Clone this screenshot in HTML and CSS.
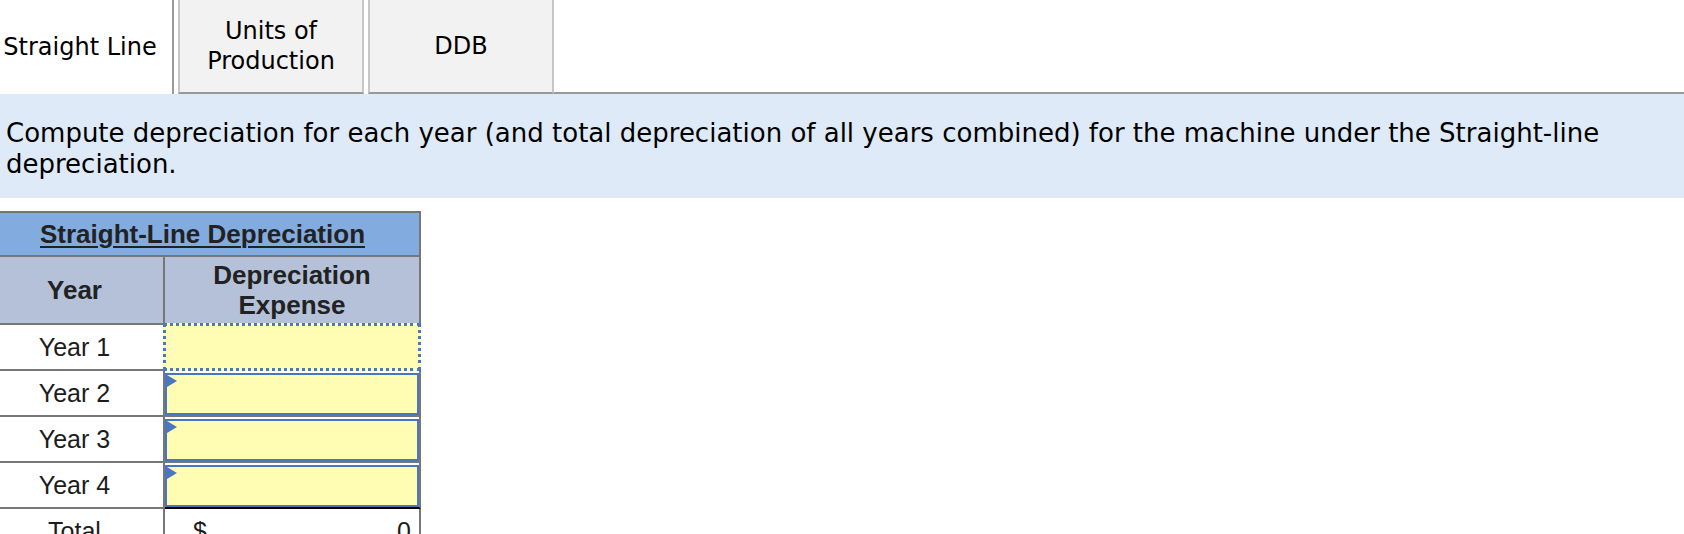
FILE: index.html
```html
<!DOCTYPE html>
<html lang="en">
<head>
<meta charset="utf-8">
<title>Straight-Line Depreciation</title>
<link rel="stylesheet" href="styles.css">
</head>
<body>
<div class="tabs">
  <div class="tab tab-active">Straight Line</div>
  <div class="tab">Units of<br>Production</div>
  <div class="tab">DDB</div>
  <div class="tab-fill"></div>
</div>

<div class="prompt">Compute depreciation for each year (and total depreciation of all years combined) for the machine under the Straight-line depreciation.</div>

<div class="sl">
  <div class="cell title"><span class="title-text">Straight-Line Depreciation</span></div>
  <div class="cell head col1">Year</div>
  <div class="cell head col2">Depreciation<br>Expense</div>

  <div class="cell label">Year 1</div>
  <div class="cell input-cell"><div class="input input-focus"></div></div>

  <div class="cell label">Year 2</div>
  <div class="cell input-cell"><div class="input input-marked"></div></div>

  <div class="cell label">Year 3</div>
  <div class="cell input-cell"><div class="input input-marked"></div></div>

  <div class="cell label">Year 4</div>
  <div class="cell input-cell last-input"><div class="input input-marked"></div></div>

  <div class="cell label">Total</div>
  <div class="cell total"><span>$</span><span>0</span></div>
</div>
</body>
</html>
```

FILE: styles.css
```css
html, body {
  margin: 0;
  padding: 0;
  background: #ffffff;
  overflow: hidden;
}

body {
  font-family: "DejaVu Sans", Verdana, sans-serif;
  font-size: 24px;
  color: #000000;
}

/* ---------- tabs ---------- */
.tabs {
  display: flex;
  height: 94px;
}

.tab {
  box-sizing: border-box;
  width: 186px;
  height: 94px;
  display: flex;
  align-items: center;
  justify-content: center;
  text-align: center;
  font-size: 24px;
  line-height: 30px;
  background: #f2f2f2;
  border-left: 2px solid #c6c6c6;
  border-right: 2px solid #c6c6c6;
  border-bottom: 2px solid #999999;
  margin-left: 4px;
}

.tab-active {
  width: 186px;
  margin-left: -12px;
  background: #ffffff;
  border-left: none;
  border-right: 2px solid #9a9a9a;
  border-bottom: none;
}

.tab-fill {
  flex: 1;
  border-bottom: 2px solid #999999;
}

/* ---------- prompt ---------- */
.prompt {
  background: #deeaf8;
  padding: 24px 6px 18px 6px;
  font-size: 26px;
  line-height: 31px;
}

/* ---------- table ---------- */
.sl {
  margin-top: 13px;
  margin-left: -14px;
  width: 435px;
  display: grid;
  grid-template-columns: 179px 256px;
  border-top: 2px solid #777777;
  font-family: "Liberation Sans", Arial, Helvetica, sans-serif;
  color: #1c1c1c;
}

.cell {
  box-sizing: border-box;
  border-bottom: 2px solid #777777;
  border-right: 2px solid #777777;
  height: 46px;
  display: flex;
  align-items: center;
  justify-content: center;
  text-align: center;
}

.title {
  grid-column: 1 / span 2;
  height: 44px;
  background: #82abe0;
  font-weight: bold;
  font-size: 26px;
  color: #222222;
}

.title-text {
  text-decoration: underline;
  text-decoration-thickness: 2px;
  text-underline-offset: 3px;
}

.head {
  height: 68px;
  background: #b4c1d8;
  font-weight: bold;
  font-size: 26px;
  line-height: 30px;
  color: #222222;
}

.label {
  font-size: 25px;
  background: #ffffff;
}

.input-cell {
  display: block;
  padding-top: 2px;
}

.last-input {
  border-bottom-color: #000000;
}

.input {
  position: relative;
  box-sizing: border-box;
  height: 42px;
  background: #fffdb4;
  border: 2px solid #4a76bd;
}

.input-focus {
  height: 48px;
  margin: -4px -2px 0 -2px;
  border: 3px dotted #4a78c0;
}

.input-marked::before {
  content: "";
  position: absolute;
  top: 0;
  left: 0;
  width: 0;
  height: 0;
  border-left: 10px solid #4a78c0;
  border-top: 6px solid transparent;
  border-bottom: 6px solid transparent;
}

.total {
  justify-content: space-between;
  padding: 0 8px 0 28px;
  font-size: 25px;
}
```
